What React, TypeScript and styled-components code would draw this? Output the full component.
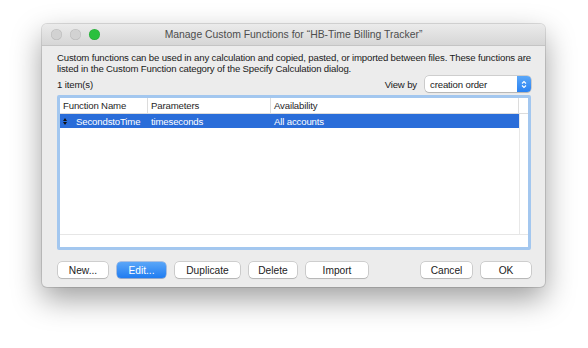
import React from 'react';
import styled, {createGlobalStyle, css} from 'styled-components';

const GlobalStyle = createGlobalStyle`
  html, body {
    margin: 0;
    padding: 0;
    background: #ffffff;
    font-family: "Liberation Sans", Arial, sans-serif;
  }
`

// small system text used across the dialog
const smallFont = css`
  font-size: 9.6px;
  letter-spacing: -0.15px;
`

const Page = styled.div`
  width: 588px;
  height: 348px;
  padding: 24px 0 0 42px;
  box-sizing: border-box;
`

const Window = styled.div`
  width: 503px;
  height: 263px;
  background: #ececec;
  border-radius: 5px;
  box-shadow: 0 12px 30px rgba(0, 0, 0, 0.38), 0 0 0 1px rgba(0, 0, 0, 0.12);
  display: flex;
  flex-direction: column;
  overflow: hidden;
`

const TitleBar = styled.div`
  height: 21px;
  background: linear-gradient(#ebebeb, #d6d6d6);
  border-bottom: 1px solid #c4c4c4;
  display: flex;
  align-items: center;
  position: relative;
  padding-left: 9px;
`

const Lights = styled.div`
  display: flex;
  gap: 8px;
`

const Light = styled.div<{color: string}>`
  width: 11px;
  height: 11px;
  border-radius: 50%;
  background: ${(props) => props.color};
  box-shadow: inset 0 0 0 0.5px rgba(0, 0, 0, 0.12);
`

const Title = styled.div`
  position: absolute;
  left: 0;
  right: 0;
  text-align: center;
  font-size: 10.4px;
  color: #4d4d4d;
  pointer-events: none;
`

const Body = styled.div`
  flex: 1;
  display: flex;
  flex-direction: column;
  padding: 6px 14px 9px 15px;
`

const Description = styled.p`
  margin: 0;
  ${smallFont};
  line-height: 11px;
  color: #1a1a1a;
`

const InfoRow = styled.div`
  display: flex;
  align-items: center;
  justify-content: space-between;
  margin-top: 1px;
  height: 18px;
`

const SmallText = styled.span`
  ${smallFont};
  color: #1a1a1a;
`

const ViewBy = styled.div`
  display: flex;
  align-items: center;
  gap: 8px;
`

const Select = styled.div`
  width: 106px;
  height: 16px;
  box-sizing: border-box;
  background: #ffffff;
  border-radius: 4px;
  box-shadow: 0 0 0 0.5px rgba(0, 0, 0, 0.25), 0 1px 1px rgba(0, 0, 0, 0.12);
  display: flex;
  align-items: center;
  justify-content: space-between;
  padding-left: 5px;
  ${smallFont};
  color: #1a1a1a;
`

const SelectArrow = styled.div`
  width: 14px;
  height: 16px;
  background: linear-gradient(#5ba7f8, #2a82f2);
  border-radius: 0 4px 4px 0;
  display: flex;
  align-items: center;
  justify-content: center;
`

const Table = styled.div`
  margin-top: 2px;
  height: 155px;
  box-sizing: border-box;
  border: 3px solid #a3c7ef;
  border-radius: 2px;
  background: #ffffff;
  display: flex;
  flex-direction: column;
`

const Grid = styled.div`
  flex: 1;
  display: grid;
  grid-template-columns: 88px 123px 248px 1fr;
  grid-template-rows: 16px 14px 1fr;
  border-bottom: 1px solid #e6e6e6;
`

const HeaderCell = styled.div<{last?: boolean}>`
  ${smallFont};
  color: #1f1f1f;
  padding-left: 3px;
  display: flex;
  align-items: center;
  border-bottom: 1px solid #dcdcdc;
  border-right: ${(props) => (props.last ? 'none' : '1px solid #dcdcdc')};
`

const RowCell = styled.div<{selected?: boolean; filler?: boolean}>`
  ${smallFont};
  color: ${(props) => (props.selected ? '#ffffff' : '#1a1a1a')};
  background: ${(props) => (props.selected ? '#2a6dd9' : '#ffffff')};
  border-left: ${(props) => (props.filler ? '1px solid #e8e8e8' : 'none')};
  padding-left: 3px;
  display: flex;
  align-items: center;
  gap: 9px;
  white-space: nowrap;
  overflow: hidden;
`

const EmptyCell = styled.div<{filler?: boolean}>`
  border-left: ${(props) => (props.filler ? '1px solid #e8e8e8' : 'none')};
`

const TableFooter = styled.div`
  height: 12px;
`

const ButtonRow = styled.div`
  margin-top: auto;
  display: flex;
  align-items: center;
  padding-left: 1px;
`

const Button = styled.button<{primary?: boolean; w: number; gapAfter?: number}>`
  width: ${(props) => props.w}px;
  height: 16px;
  margin-right: ${(props) => props.gapAfter ?? 9}px;
  padding: 0;
  border: none;
  border-radius: 4px;
  font-family: "Liberation Sans", Arial, sans-serif;
  font-size: 10.2px;
  color: ${(props) => (props.primary ? '#ffffff' : '#222222')};
  background: ${(props) => (props.primary ? 'linear-gradient(#5aa6f8, #1f7cf1)' : '#ffffff')};
  box-shadow: ${(props) => (props.primary
    ? '0 0 0 0.5px rgba(20, 90, 200, 0.6), 0 1px 1px rgba(0, 0, 0, 0.15)'
    : '0 0 0 0.5px rgba(0, 0, 0, 0.25), 0 1px 1px rgba(0, 0, 0, 0.12)')};
`

const Spacer = styled.div`
  flex: 1;
`

const SortIcon = () => (
    <svg width="4" height="7" viewBox="0 0 4 7">
        <path d="M2 0 L4 3 L0 3 Z M0 4 L4 4 L2 7 Z" fill="#111" />
    </svg>
)

const Updown = () => (
    <svg width="6" height="9" viewBox="0 0 6 9">
        <path d="M1 3.5 L3 1.5 L5 3.5 M1 5.5 L3 7.5 L5 5.5" stroke="#fff" strokeWidth="1.1" fill="none" />
    </svg>
)

const App: React.FC = () => {
    return <Page>
        <GlobalStyle />
        <Window>
            <TitleBar>
                <Lights>
                    <Light color="#d2d2d2" />
                    <Light color="#d2d2d2" />
                    <Light color="#2ac03e" />
                </Lights>
                <Title>Manage Custom Functions for “HB-Time Billing Tracker”</Title>
            </TitleBar>
            <Body>
                <Description>
                    Custom functions can be used in any calculation and copied, pasted, or imported between files. These functions are
                    listed in the Custom Function category of the Specify Calculation dialog.
                </Description>
                <InfoRow>
                    <SmallText>1 item(s)</SmallText>
                    <ViewBy>
                        <SmallText>View by</SmallText>
                        <Select>
                            creation order
                            <SelectArrow><Updown /></SelectArrow>
                        </Select>
                    </ViewBy>
                </InfoRow>
                <Table>
                    <Grid>
                        <HeaderCell>Function Name</HeaderCell>
                        <HeaderCell>Parameters</HeaderCell>
                        <HeaderCell>Availability</HeaderCell>
                        <HeaderCell last />
                        <RowCell selected><SortIcon />SecondstoTime</RowCell>
                        <RowCell selected>timeseconds</RowCell>
                        <RowCell selected>All accounts</RowCell>
                        <RowCell filler />
                        <EmptyCell />
                        <EmptyCell />
                        <EmptyCell />
                        <EmptyCell filler />
                    </Grid>
                    <TableFooter />
                </Table>
                <ButtonRow>
                    <Button w={50}>New...</Button>
                    <Button w={49} primary>Edit...</Button>
                    <Button w={65}>Duplicate</Button>
                    <Button w={48}>Delete</Button>
                    <Button w={62}>Import</Button>
                    <Spacer />
                    <Button w={51}>Cancel</Button>
                    <Button w={50} gapAfter={0}>OK</Button>
                </ButtonRow>
            </Body>
        </Window>
    </Page>
}

export default App
